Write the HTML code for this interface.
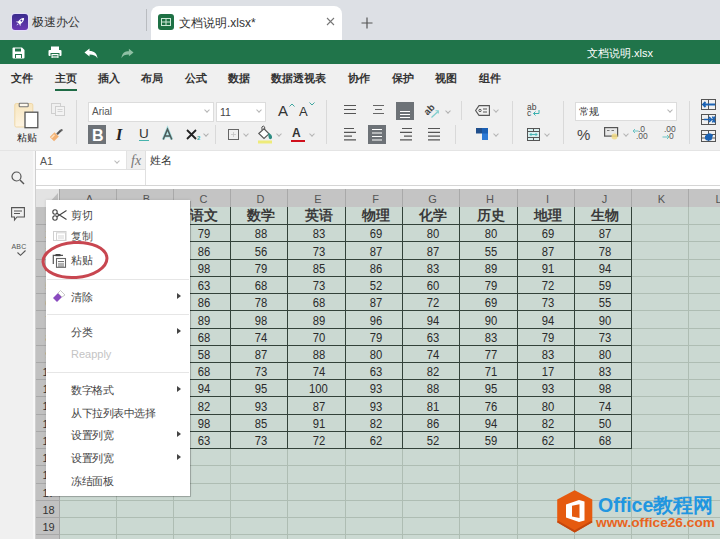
<!DOCTYPE html>
<html><head><meta charset="utf-8">
<style>
*{margin:0;padding:0;box-sizing:border-box}
html,body{width:720px;height:539px;overflow:hidden;background:#f0f0f0;font-family:"Liberation Sans",sans-serif;color:#333}
.a{position:absolute}
svg{position:absolute;overflow:visible}
.mi{position:absolute;top:70px;font-size:11px;line-height:17px;color:#222;white-space:nowrap;font-weight:bold;color:#333}
.t{position:absolute;white-space:nowrap}
.ch{top:190px;height:18px;line-height:18px;text-align:center;font-size:11px;color:#555;padding-left:4px}
.rh{left:37px;width:23px;text-align:center;font-size:11px;line-height:17px;color:#333}
.hd{display:flex;align-items:center;justify-content:center;font-size:13.5px;font-weight:bold;color:#3a3a3a;padding-left:4px}
.dn{display:flex;align-items:center;justify-content:center;padding-top:2px;padding-left:4px;font-size:12.5px;color:#2a2a2a}
.dn span{display:inline-block;transform:scaleX(0.9)}
.cm{position:absolute;left:71px;font-size:10.5px;letter-spacing:-0.5px;line-height:12px;color:#444;white-space:nowrap}
.arr{position:absolute;left:177px;width:0;height:0;border-left:4px solid #444;border-top:3.5px solid transparent;border-bottom:3.5px solid transparent}
.sep{position:absolute;left:47px;width:142px;height:1px;background:#e6e6e6}
.chev{position:absolute;width:5px;height:5px;border-right:1px solid #999;border-bottom:1px solid #999;transform:rotate(45deg)}
.vs{position:absolute;width:1px;background:#d9d9d9}
</style></head><body>
<!-- tab bar -->
<div class="a" style="left:0;top:0;width:720px;height:40px;background:#dde0e5"></div>
<div class="a" style="left:11px;top:13px;width:18px;height:18px;border-radius:4px;background:#e6defa"></div>
<div class="a" style="left:12px;top:14px;width:16px;height:16px;border-radius:3px;background:linear-gradient(#3a2c8e,#6b38b3)"></div>
<svg style="left:12px;top:14px" width="16" height="16" viewBox="0 0 16 16"><g transform="rotate(45 8 8)"><path d="M8 2.2 C10 4 10.3 7 9.6 10 H6.4 C5.7 7 6 4 8 2.2 Z" fill="#fff"/><path d="M6.4 8.5 L4.8 10.8 L6.4 10.4 Z M9.6 8.5 L11.2 10.8 L9.6 10.4 Z" fill="#fff"/><circle cx="8" cy="6" r="1" fill="#4a30a0"/><path d="M7.2 10.8 L8 13 L8.8 10.8 Z" fill="#d9c8ff"/></g></svg>
<div class="t" style="left:32px;top:15px;font-size:11.5px;line-height:14px;color:#333">极速办公</div>
<div class="a" style="left:146px;top:9px;width:1px;height:22px;background:#b9bcc0"></div>
<div class="a" style="left:151px;top:6px;width:191px;height:34px;background:#fff;border-radius:8px 8px 0 0"></div>
<div class="a" style="left:158px;top:14px;width:16px;height:16px;border-radius:3px;background:#1e7145"></div>
<svg style="left:158px;top:14px" width="16" height="16" viewBox="0 0 16 16"><rect x="3.5" y="4.5" width="9" height="7" fill="none" stroke="#cfe9d8" stroke-width="1"/><path d="M3.5 8 H12.5 M8 4.5 V11.5" stroke="#cfe9d8" stroke-width="1"/></svg>
<div class="t" style="left:179px;top:16px;font-size:12px;line-height:15px;color:#333">文档说明.xlsx*</div>
<svg style="left:326px;top:17px" width="9" height="9" viewBox="0 0 9 9"><path d="M1 1 L8 8 M8 1 L1 8" stroke="#777" stroke-width="1.1"/></svg>
<svg style="left:361px;top:17px" width="12" height="12" viewBox="0 0 12 12"><path d="M6 0.5 V11.5 M0.5 6 H11.5" stroke="#555" stroke-width="1.2"/></svg>

<!-- green bar -->
<div class="a" style="left:0;top:40px;width:720px;height:24px;background:#20744a"></div>
<svg style="left:12px;top:47px" width="13" height="12" viewBox="0 0 13 12"><path d="M0.5 1.5 Q0.5 0.5 1.5 0.5 H10 L12.5 3 V10.5 Q12.5 11.5 11.5 11.5 H1.5 Q0.5 11.5 0.5 10.5 Z" fill="#fff"/><rect x="3" y="1.5" width="6" height="3" fill="#20744a"/><rect x="3" y="7" width="7" height="4" fill="#20744a"/><rect x="4" y="8" width="5" height="3" fill="#fff"/></svg>
<svg style="left:48px;top:46px" width="14" height="13" viewBox="0 0 14 13"><rect x="3" y="0.5" width="8" height="3.5" fill="#fff"/><rect x="0.5" y="4" width="13" height="6" rx="1" fill="#fff"/><rect x="3" y="7.5" width="8" height="5" fill="#fff" stroke="#20744a" stroke-width="1"/><path d="M4.5 9.5 H9.5 M4.5 11 H9.5" stroke="#20744a" stroke-width="0.8"/></svg>
<svg style="left:84px;top:48px" width="14" height="11" viewBox="0 0 14 11"><path d="M0.5 4.5 L5.5 0.5 V3 C10 3 13 5 13.5 10.5 C12 7.5 9.5 6.5 5.5 6.5 V8.5 Z" fill="#fff"/></svg>
<svg style="left:121px;top:48px" width="13" height="11" viewBox="0 0 14 11"><path d="M13.5 4.5 L8.5 0.5 V3 C4 3 1 5 0.5 10.5 C2 7.5 4.5 6.5 8.5 6.5 V8.5 Z" fill="#8fc0a4"/></svg>
<div class="t" style="left:587px;top:47px;font-size:11px;line-height:13px;color:#fff">文档说明.xlsx</div>

<!-- menu bar -->
<div class="mi" style="left:11px">文件</div>
<div class="mi" style="left:55px">主页</div>
<div class="a" style="left:55px;top:89px;width:22px;height:2px;background:#1e6b45"></div>
<div class="mi" style="left:98px">插入</div>
<div class="mi" style="left:141px">布局</div>
<div class="mi" style="left:185px">公式</div>
<div class="mi" style="left:228px">数据</div>
<div class="mi" style="left:271px">数据透视表</div>
<div class="mi" style="left:348px">协作</div>
<div class="mi" style="left:392px">保护</div>
<div class="mi" style="left:435px">视图</div>
<div class="mi" style="left:479px">组件</div>

<!-- ribbon -->
<div class="a" style="left:0;top:150px;width:720px;height:1px;background:#e4e4e4"></div>
<!-- paste -->
<svg style="left:14px;top:102px" width="25" height="27" viewBox="0 0 25 27"><defs><linearGradient id="pg" x1="0" y1="0" x2="0" y2="1"><stop offset="0" stop-color="#f8e6bf"/><stop offset="1" stop-color="#fdf4e3"/></linearGradient></defs><rect x="0.8" y="1.5" width="18" height="23.5" rx="1.5" fill="url(#pg)" stroke="#efd7a6" stroke-width="1"/><rect x="5.2" y="1.2" width="9" height="3.6" rx="0.8" fill="#fdf8ee" stroke="#777" stroke-width="1.1"/><rect x="11" y="10.2" width="12.8" height="15.5" fill="#fff" stroke="#555" stroke-width="1.3"/></svg>
<div class="t" style="left:17px;top:132px;font-size:9.5px;line-height:11px;color:#222">粘贴</div>
<svg style="left:51px;top:103px" width="14" height="13" viewBox="0 0 14 13"><rect x="0.5" y="0.5" width="9" height="10" fill="none" stroke="#cfcfcf" stroke-width="1"/><rect x="4.5" y="3.5" width="9" height="9" fill="#f3f3f3" stroke="#cfcfcf" stroke-width="1"/><path d="M6.5 6.5 H11.5 M6.5 8.5 H11.5" stroke="#cfcfcf" stroke-width="0.9"/></svg>
<svg style="left:49px;top:129px" width="14" height="13" viewBox="0 0 14 13"><path d="M0.8 8 L5.5 3.3 L9.8 7.6 L5.1 12.3 Z" fill="#f3b173"/><path d="M2.5 8.8 L5.5 5.8" stroke="#fde3c3" stroke-width="1.4"/><path d="M8 5.2 L12 1.2" stroke="#555" stroke-width="2.2"/><circle cx="12.6" cy="1.2" r="1.1" fill="#666"/></svg>
<div class="vs" style="left:76px;top:100px;height:44px"></div>
<!-- font box -->
<div class="a" style="left:88px;top:102px;width:126px;height:20px;background:#fff;border:1px solid #dcdcdc"></div>
<div class="t" style="left:92px;top:106px;font-size:10px;line-height:12px;color:#555">Arial</div>
<div class="chev" style="left:205px;top:108px;width:4px;height:4px;border-color:#b5b5b5"></div>
<div class="a" style="left:216px;top:102px;width:50px;height:20px;background:#fff;border:1px solid #dcdcdc"></div>
<div class="t" style="left:220px;top:106px;font-size:10.5px;line-height:12px;color:#444">11</div>
<div class="chev" style="left:257px;top:108px;width:4px;height:4px;border-color:#b5b5b5"></div>
<!-- grow / shrink -->
<div class="t" style="left:278px;top:103px;font-size:15px;line-height:15px;color:#333">A</div>
<svg style="left:289px;top:103px" width="6" height="4" viewBox="0 0 6 4"><path d="M0.5 3.5 L3 1 L5.5 3.5" fill="none" stroke="#3fa7a0" stroke-width="1"/></svg>
<div class="t" style="left:299px;top:105px;font-size:13px;line-height:13px;color:#333">A</div>
<svg style="left:309px;top:102px" width="6" height="4" viewBox="0 0 6 4"><path d="M0.5 0.5 L3 3 L5.5 0.5" fill="none" stroke="#3fa7a0" stroke-width="1"/></svg>
<div class="vs" style="left:326px;top:100px;height:44px"></div>
<!-- B I U A X2 -->
<div class="a" style="left:88px;top:125px;width:18px;height:19px;background:#6d7277"></div>
<div class="t" style="left:92px;top:128px;font-size:16px;line-height:16px;font-weight:bold;color:#fff">B</div>
<div class="t" style="left:116px;top:127px;font-family:'Liberation Serif',serif;font-style:italic;font-weight:bold;font-size:16px;line-height:16px;color:#222">I</div>
<div class="t" style="left:139px;top:127px;font-size:13.5px;line-height:14px;color:#333">U</div>
<div class="a" style="left:139px;top:140px;width:10px;height:1px;background:#46b3ad"></div>
<svg style="left:162px;top:128px" width="11" height="12" viewBox="0 0 11 12"><path d="M1.2 11.5 L5.5 1.2 L9.8 11.5 M2.8 8 H8.2" fill="none" stroke="#a6dede" stroke-width="3"/><path d="M1.2 11.5 L5.5 1.2 L9.8 11.5 M2.8 8 H8.2" fill="none" stroke="#4d5a5a" stroke-width="1.5"/></svg>
<svg style="left:186px;top:129px" width="11" height="11" viewBox="0 0 11 11"><path d="M1 1 L10 10 M10 1 L1 10" stroke="#222" stroke-width="1.8"/></svg>
<div class="t" style="left:197px;top:135px;font-size:6px;line-height:6px;color:#3aa7a3;font-weight:bold">2</div>
<div class="chev" style="left:204px;top:132px;width:4px;height:4px;border-color:#b0b0b0"></div>
<div class="vs" style="left:215px;top:125px;height:19px"></div>
<!-- border / fill / font color -->
<svg style="left:228px;top:129px" width="11" height="11" viewBox="0 0 11 11"><rect x="0.5" y="0.5" width="10" height="10" fill="none" stroke="#666" stroke-width="1"/><path d="M5.5 3 V8 M3 5.5 H8" stroke="#c4c4c4" stroke-width="0.8"/></svg>
<div class="chev" style="left:244px;top:132px;width:4px;height:4px;border-color:#b5b5b5"></div>
<svg style="left:257px;top:125px" width="17" height="19" viewBox="0 0 17 19"><path d="M1.8 8.5 L7 3.8 L12 8.8 L7 13.5 Z" fill="#fff" stroke="#555" stroke-width="1.1"/><path d="M5 5 Q4.2 1 6.2 1 Q8.2 1 7.8 4.6" fill="none" stroke="#555" stroke-width="1"/><path d="M11.5 8 Q15.5 9.5 15 13 Q14 15 12 13.5 Q11 11 11.5 8 Z" fill="#2d8c82"/><rect x="1" y="15.5" width="14" height="3" fill="#eeeb7a"/></svg>
<div class="chev" style="left:277px;top:132px;width:4px;height:4px;border-color:#b5b5b5"></div>
<div class="t" style="left:292px;top:127px;font-size:12px;line-height:12px;font-weight:bold;color:#333">A</div>
<div class="a" style="left:291px;top:140px;width:14px;height:2px;background:#d0101c"></div>
<div class="chev" style="left:310px;top:132px;width:4px;height:4px;border-color:#b5b5b5"></div>
<!-- alignment -->
<svg style="left:343px;top:105px" width="14" height="10" viewBox="0 0 14 10"><path d="M1 0.5 H13 M1 4.5 H13 M1 8.5 H13" stroke="#555" stroke-width="1.2"/></svg>
<svg style="left:372px;top:105px" width="13" height="10" viewBox="0 0 13 10"><path d="M1 0.5 H12 M3 4.5 H10 M1 8.5 H12" stroke="#666" stroke-width="1.2"/></svg>
<div class="a" style="left:396px;top:102px;width:18px;height:18px;background:#6d7277"></div>
<svg style="left:396px;top:102px" width="18" height="18" viewBox="0 0 18 18"><path d="M4 9.5 H14 M4 12.5 H14 M4 15.5 H14" stroke="#fff" stroke-width="1"/></svg>
<svg style="left:424px;top:103px" width="17" height="16" viewBox="0 0 17 16"><text x="0" y="10" font-family="Liberation Sans" font-size="9.5" font-weight="bold" fill="#444" transform="rotate(-45 5 7)">ab</text><path d="M7.5 14.5 L14 8.5" stroke="#7fcdcd" stroke-width="1.3"/><path d="M11.5 7.8 L14.3 7.8 L14.3 10.6" fill="none" stroke="#7fcdcd" stroke-width="1.1"/></svg>
<div class="chev" style="left:446px;top:109px;width:4px;height:4px;border-color:#b0b0b0"></div>
<svg style="left:343px;top:128px" width="14" height="13" viewBox="0 0 14 13"><path d="M1 0.5 H11 M1 4.3 H13 M1 8.1 H9 M1 11.9 H13" stroke="#555" stroke-width="1.2"/></svg>
<div class="a" style="left:368px;top:125px;width:18px;height:19px;background:#6d7277"></div>
<svg style="left:368px;top:125px" width="18" height="19" viewBox="0 0 18 19"><path d="M4 4.5 H14 M4 8 H14 M4 11.5 H14 M4 15 H14" stroke="#fff" stroke-width="1"/></svg>
<svg style="left:399px;top:128px" width="14" height="13" viewBox="0 0 14 13"><path d="M3 0.5 H13 M1 4.3 H13 M5 8.1 H13 M1 11.9 H13" stroke="#555" stroke-width="1.2"/></svg>
<svg style="left:427px;top:128px" width="14" height="13" viewBox="0 0 14 13"><path d="M1 0.5 H13 M1 4.3 H13 M1 8.1 H13 M1 11.9 H13" stroke="#555" stroke-width="1.2"/></svg>
<div class="vs" style="left:455px;top:125px;height:19px"></div>
<div class="vs" style="left:461px;top:101px;height:19px"></div>
<!-- tag / blue -->
<svg style="left:475px;top:105px" width="15" height="11" viewBox="0 0 15 11"><path d="M4 0.6 H14.4 V10.4 H4 L0.6 5.5 Z" fill="none" stroke="#555" stroke-width="1.1"/><circle cx="5" cy="5.5" r="1.2" fill="none" stroke="#555" stroke-width="1"/><path d="M8 4 H12 M8 7 H12" stroke="#555" stroke-width="1"/></svg>
<div class="chev" style="left:494px;top:108px;width:4px;height:4px;border-color:#b5b5b5"></div>
<svg style="left:476px;top:128px" width="12" height="12" viewBox="0 0 12 12"><rect x="0" y="0" width="6" height="5.5" fill="#1f4e8c"/><rect x="6" y="0" width="6" height="12" fill="#2d7ad6"/><rect x="6" y="0" width="6" height="5.5" fill="#1a5fb4"/></svg>
<div class="chev" style="left:494px;top:132px;width:4px;height:4px;border-color:#b5b5b5"></div>
<div class="vs" style="left:512px;top:101px;height:43px"></div>
<!-- wrap / merge -->
<div class="t" style="left:527px;top:104px;font-size:8.5px;line-height:6px;color:#444">ab<br>c</div>
<svg style="left:532px;top:110px" width="8" height="7" viewBox="0 0 8 7"><path d="M7 0 V3.5 H1.5 M3.5 1.5 L1.5 3.5 L3.5 5.5" fill="none" stroke="#3ab0b0" stroke-width="1"/></svg>
<svg style="left:527px;top:128px" width="13" height="13" viewBox="0 0 13 13"><rect x="0.5" y="0.5" width="12" height="12" fill="#d9f0f0" stroke="#555" stroke-width="1"/><path d="M0.5 3.5 H12.5 M0.5 9.5 H12.5 M6.5 0.5 V3.5 M6.5 9.5 V12.5" stroke="#555" stroke-width="1"/><path d="M3 6.5 H10 M4.5 5 L3 6.5 L4.5 8 M8.5 5 L10 6.5 L8.5 8" fill="none" stroke="#3ab0b0" stroke-width="0.9"/></svg>
<div class="chev" style="left:545px;top:132px;width:4px;height:4px;border-color:#b5b5b5"></div>
<div class="vs" style="left:563px;top:101px;height:43px"></div>
<!-- number format -->
<div class="a" style="left:575px;top:102px;width:102px;height:19px;background:#fff;border:1px solid #dcdcdc"></div>
<div class="t" style="left:579px;top:106px;font-size:10px;line-height:12px;color:#333">常规</div>
<div class="chev" style="left:668px;top:108px;width:4px;height:4px;border-color:#b5b5b5"></div>
<div class="t" style="left:577px;top:127px;font-size:15px;line-height:15px;color:#444">%</div>
<svg style="left:604px;top:127px" width="16" height="14" viewBox="0 0 16 14"><rect x="0.6" y="0.6" width="13" height="8.5" fill="#e8e8e8" stroke="#555" stroke-width="1.2"/><path d="M3 3.5 H5.5 M7.5 3.5 H10" stroke="#777" stroke-width="1.2"/><circle cx="10.5" cy="9.5" r="3" fill="#f3dc86" opacity="0.85"/></svg>
<div class="chev" style="left:624px;top:132px;width:4px;height:4px;border-color:#b5b5b5"></div>
<div class="t" style="left:638px;top:126px;font-size:8.5px;line-height:7px;color:#555">.0</div>
<div class="t" style="left:636px;top:133px;font-size:8.5px;line-height:7px;color:#555">.00</div>
<svg style="left:632px;top:128px" width="7" height="6" viewBox="0 0 7 6"><path d="M6.5 3 H1 M3 1 L1 3 L3 5" fill="none" stroke="#6cc4c4" stroke-width="1"/></svg>
<div class="t" style="left:664px;top:126px;font-size:8.5px;line-height:7px;color:#555">.00</div>
<svg style="left:662px;top:134px" width="8" height="6" viewBox="0 0 8 6"><path d="M0.5 3 H7 M5 1 L7 3 L5 5" fill="none" stroke="#6cc4c4" stroke-width="1"/></svg>
<div class="t" style="left:669px;top:133px;font-size:8.5px;line-height:7px;color:#555">0</div>
<div class="vs" style="left:689px;top:101px;height:43px"></div>
<!-- right icons -->
<svg style="left:701px;top:99px" width="15" height="43" viewBox="0 0 15 43"><g fill="none" stroke="#555" stroke-width="1"><rect x="0.5" y="0.5" width="14" height="10"/><path d="M7.5 0.5 V10.5 M0.5 5.5 H14.5"/><rect x="0.5" y="15.5" width="14" height="10"/><path d="M7.5 15.5 V25.5 M0.5 20.5 H14.5"/><rect x="0.5" y="31.5" width="14" height="11"/><path d="M7.5 31.5 V42.5 M0.5 35.5 H14.5 M0.5 39 H14.5"/></g><path d="M2 5.5 H14 M4.5 3 L2 5.5 L4.5 8" fill="none" stroke="#1b62b3" stroke-width="1.8"/><path d="M3 20.5 H10 M8 18 L10.5 20.5 L8 23 M11.5 17.5 L14 23.5 M14 17.5 L11.5 23.5" fill="none" stroke="#1b62b3" stroke-width="1.6"/><path d="M4 37 Q8 32 12 36 L10.5 41 Q6 43 4 40 Z" fill="#1b62b3"/></svg>


<!-- sidebar -->
<div class="a" style="left:33px;top:151px;width:2px;height:388px;background:#f7f7f7"></div><div class="a" style="left:35px;top:151px;width:1px;height:388px;background:#cfcfcf"></div>
<svg style="left:11px;top:171px" width="14" height="14" viewBox="0 0 14 14"><circle cx="5.5" cy="5.5" r="4.5" fill="none" stroke="#555" stroke-width="1.2"/><path d="M9 9 L13 13" stroke="#555" stroke-width="1.4"/></svg>
<svg style="left:11px;top:207px" width="14" height="14" viewBox="0 0 14 14"><path d="M0.6 0.6 H13.4 V10 H6 L3.5 13 V10 H0.6 Z" fill="none" stroke="#555" stroke-width="1.1"/><path d="M3 4 H11 M3 6.5 H9" stroke="#555" stroke-width="1"/></svg>
<div class="t" style="left:11.5px;top:243px;font-size:7px;line-height:7px;color:#555;letter-spacing:0.2px">ABC</div>
<svg style="left:17px;top:250px" width="9" height="6" viewBox="0 0 9 6"><path d="M0.5 2.5 L3.5 5.3 L8.5 0.5" fill="none" stroke="#555" stroke-width="1.1"/></svg>

<!-- formula bar -->
<div class="a" style="left:36px;top:151px;width:684px;height:34px;background:#fff"></div>
<div class="a" style="left:36px;top:185px;width:684px;height:1px;background:#d5d5d5"></div>
<div class="a" style="left:36px;top:169px;width:109px;height:1px;background:#e0e0e0"></div>
<div class="a" style="left:126px;top:151px;width:19px;height:18px;background:#efefef;border-left:1px solid #e3e3e3"></div>
<div class="a" style="left:145px;top:151px;width:1px;height:34px;background:#e0e0e0"></div>
<div class="t" style="left:40px;top:155px;font-size:10.5px;line-height:12px;color:#555">A1</div>
<div class="chev" style="left:115px;top:159px;width:4px;height:4px;border-color:#bbb"></div>
<div class="t" style="left:131px;top:153px;font-family:'Liberation Serif',serif;font-style:italic;font-size:14px;line-height:16px;color:#777">fx</div>
<div class="t" style="left:150px;top:153px;font-size:11px;line-height:14px;color:#333">姓名</div>

<!-- sheet -->
<div class="a" style="left:36px;top:186px;width:684px;height:3px;background:#fff"></div>
<div class="a" style="left:36px;top:189px;width:23px;height:18px;background:#e3e3e3"></div>
<svg style="left:47px;top:193px" width="11" height="12" viewBox="0 0 11 12"><path d="M11 0 V12 H0 Z" fill="#bdbdbd"/></svg>
<div class="a" style="left:59px;top:189px;width:661px;height:18px;background:#c4c4c4"></div>
<div class="a" style="left:36px;top:207px;width:23px;height:332px;background:#c1c1c1"></div>
<div class="a" style="left:59px;top:189px;width:1px;height:350px;background:#a6a6a6"></div>
<div class="a" style="left:60px;top:207px;width:1px;height:332px;background:#e2e9e4"></div>
<div class="a" style="left:60px;top:207px;width:660px;height:332px;background:#cbd9d2"></div>
<div class="a" style="left:116px;top:189px;width:1px;height:18px;background:#a9a9a9"></div>
<div class="a" style="left:116px;top:207px;width:1px;height:332px;background:#aebdb3"></div>
<div class="a" style="left:173px;top:189px;width:1px;height:18px;background:#a9a9a9"></div>
<div class="a" style="left:173px;top:207px;width:1px;height:332px;background:#aebdb3"></div>
<div class="a" style="left:230px;top:189px;width:1px;height:18px;background:#a9a9a9"></div>
<div class="a" style="left:230px;top:207px;width:1px;height:332px;background:#aebdb3"></div>
<div class="a" style="left:287px;top:189px;width:1px;height:18px;background:#a9a9a9"></div>
<div class="a" style="left:287px;top:207px;width:1px;height:332px;background:#aebdb3"></div>
<div class="a" style="left:345px;top:189px;width:1px;height:18px;background:#a9a9a9"></div>
<div class="a" style="left:345px;top:207px;width:1px;height:332px;background:#aebdb3"></div>
<div class="a" style="left:402px;top:189px;width:1px;height:18px;background:#a9a9a9"></div>
<div class="a" style="left:402px;top:207px;width:1px;height:332px;background:#aebdb3"></div>
<div class="a" style="left:459px;top:189px;width:1px;height:18px;background:#a9a9a9"></div>
<div class="a" style="left:459px;top:207px;width:1px;height:332px;background:#aebdb3"></div>
<div class="a" style="left:517px;top:189px;width:1px;height:18px;background:#a9a9a9"></div>
<div class="a" style="left:517px;top:207px;width:1px;height:332px;background:#aebdb3"></div>
<div class="a" style="left:574px;top:189px;width:1px;height:18px;background:#a9a9a9"></div>
<div class="a" style="left:574px;top:207px;width:1px;height:332px;background:#aebdb3"></div>
<div class="a" style="left:631px;top:189px;width:1px;height:18px;background:#a9a9a9"></div>
<div class="a" style="left:631px;top:207px;width:1px;height:332px;background:#aebdb3"></div>
<div class="a" style="left:688px;top:189px;width:1px;height:18px;background:#a9a9a9"></div>
<div class="a" style="left:688px;top:207px;width:1px;height:332px;background:#aebdb3"></div>
<div class="a" style="left:60px;top:224px;width:660px;height:1px;background:#aebdb3"></div>
<div class="a" style="left:36px;top:224px;width:23px;height:1px;background:#a8a8a8"></div>
<div class="a" style="left:60px;top:241px;width:660px;height:1px;background:#aebdb3"></div>
<div class="a" style="left:36px;top:241px;width:23px;height:1px;background:#a8a8a8"></div>
<div class="a" style="left:60px;top:259px;width:660px;height:1px;background:#aebdb3"></div>
<div class="a" style="left:36px;top:259px;width:23px;height:1px;background:#a8a8a8"></div>
<div class="a" style="left:60px;top:276px;width:660px;height:1px;background:#aebdb3"></div>
<div class="a" style="left:36px;top:276px;width:23px;height:1px;background:#a8a8a8"></div>
<div class="a" style="left:60px;top:293px;width:660px;height:1px;background:#aebdb3"></div>
<div class="a" style="left:36px;top:293px;width:23px;height:1px;background:#a8a8a8"></div>
<div class="a" style="left:60px;top:310px;width:660px;height:1px;background:#aebdb3"></div>
<div class="a" style="left:36px;top:310px;width:23px;height:1px;background:#a8a8a8"></div>
<div class="a" style="left:60px;top:328px;width:660px;height:1px;background:#aebdb3"></div>
<div class="a" style="left:36px;top:328px;width:23px;height:1px;background:#a8a8a8"></div>
<div class="a" style="left:60px;top:345px;width:660px;height:1px;background:#aebdb3"></div>
<div class="a" style="left:36px;top:345px;width:23px;height:1px;background:#a8a8a8"></div>
<div class="a" style="left:60px;top:362px;width:660px;height:1px;background:#aebdb3"></div>
<div class="a" style="left:36px;top:362px;width:23px;height:1px;background:#a8a8a8"></div>
<div class="a" style="left:60px;top:379px;width:660px;height:1px;background:#aebdb3"></div>
<div class="a" style="left:36px;top:379px;width:23px;height:1px;background:#a8a8a8"></div>
<div class="a" style="left:60px;top:396px;width:660px;height:1px;background:#aebdb3"></div>
<div class="a" style="left:36px;top:396px;width:23px;height:1px;background:#a8a8a8"></div>
<div class="a" style="left:60px;top:414px;width:660px;height:1px;background:#aebdb3"></div>
<div class="a" style="left:36px;top:414px;width:23px;height:1px;background:#a8a8a8"></div>
<div class="a" style="left:60px;top:431px;width:660px;height:1px;background:#aebdb3"></div>
<div class="a" style="left:36px;top:431px;width:23px;height:1px;background:#a8a8a8"></div>
<div class="a" style="left:60px;top:448px;width:660px;height:1px;background:#aebdb3"></div>
<div class="a" style="left:36px;top:448px;width:23px;height:1px;background:#a8a8a8"></div>
<div class="a" style="left:60px;top:465px;width:660px;height:1px;background:#aebdb3"></div>
<div class="a" style="left:36px;top:465px;width:23px;height:1px;background:#a8a8a8"></div>
<div class="a" style="left:60px;top:483px;width:660px;height:1px;background:#aebdb3"></div>
<div class="a" style="left:36px;top:483px;width:23px;height:1px;background:#a8a8a8"></div>
<div class="a" style="left:60px;top:500px;width:660px;height:1px;background:#aebdb3"></div>
<div class="a" style="left:36px;top:500px;width:23px;height:1px;background:#a8a8a8"></div>
<div class="a" style="left:60px;top:517px;width:660px;height:1px;background:#aebdb3"></div>
<div class="a" style="left:36px;top:517px;width:23px;height:1px;background:#a8a8a8"></div>
<div class="a" style="left:60px;top:534px;width:660px;height:1px;background:#aebdb3"></div>
<div class="a" style="left:36px;top:534px;width:23px;height:1px;background:#a8a8a8"></div>
<div class="t ch" style="left:59px;width:57px">A</div>
<div class="t ch" style="left:116px;width:57px">B</div>
<div class="t ch" style="left:173px;width:57px">C</div>
<div class="t ch" style="left:230px;width:57px">D</div>
<div class="t ch" style="left:287px;width:58px">E</div>
<div class="t ch" style="left:345px;width:57px">F</div>
<div class="t ch" style="left:402px;width:57px">G</div>
<div class="t ch" style="left:459px;width:58px">H</div>
<div class="t ch" style="left:517px;width:57px">I</div>
<div class="t ch" style="left:574px;width:57px">J</div>
<div class="t ch" style="left:631px;width:57px">K</div>
<div class="t ch" style="left:688px;width:57px">L</div>
<div class="t rh" style="top:209px;height:17px">1</div>
<div class="t rh" style="top:226px;height:17px">2</div>
<div class="t rh" style="top:243px;height:18px">3</div>
<div class="t rh" style="top:261px;height:17px">4</div>
<div class="t rh" style="top:278px;height:17px">5</div>
<div class="t rh" style="top:295px;height:17px">6</div>
<div class="t rh" style="top:312px;height:18px">7</div>
<div class="t rh" style="top:330px;height:17px">8</div>
<div class="t rh" style="top:347px;height:17px">9</div>
<div class="t rh" style="top:364px;height:17px">10</div>
<div class="t rh" style="top:381px;height:17px">11</div>
<div class="t rh" style="top:398px;height:18px">12</div>
<div class="t rh" style="top:416px;height:17px">13</div>
<div class="t rh" style="top:433px;height:17px">14</div>
<div class="t rh" style="top:450px;height:17px">15</div>
<div class="t rh" style="top:467px;height:18px">16</div>
<div class="t rh" style="top:485px;height:17px">17</div>
<div class="t rh" style="top:502px;height:17px">18</div>
<div class="t rh" style="top:519px;height:17px">19</div>
<div class="a" style="left:59px;top:224px;width:573px;height:1px;background:#33423a"></div>
<div class="a" style="left:59px;top:241px;width:573px;height:1px;background:#33423a"></div>
<div class="a" style="left:59px;top:259px;width:573px;height:1px;background:#33423a"></div>
<div class="a" style="left:59px;top:276px;width:573px;height:1px;background:#33423a"></div>
<div class="a" style="left:59px;top:293px;width:573px;height:1px;background:#33423a"></div>
<div class="a" style="left:59px;top:310px;width:573px;height:1px;background:#33423a"></div>
<div class="a" style="left:59px;top:328px;width:573px;height:1px;background:#33423a"></div>
<div class="a" style="left:59px;top:345px;width:573px;height:1px;background:#33423a"></div>
<div class="a" style="left:59px;top:362px;width:573px;height:1px;background:#33423a"></div>
<div class="a" style="left:59px;top:379px;width:573px;height:1px;background:#33423a"></div>
<div class="a" style="left:59px;top:396px;width:573px;height:1px;background:#33423a"></div>
<div class="a" style="left:59px;top:414px;width:573px;height:1px;background:#33423a"></div>
<div class="a" style="left:59px;top:431px;width:573px;height:1px;background:#33423a"></div>
<div class="a" style="left:59px;top:448px;width:573px;height:1px;background:#33423a"></div>
<div class="a" style="left:59px;top:207px;width:1px;height:242px;background:#33423a"></div>
<div class="a" style="left:116px;top:207px;width:1px;height:242px;background:#33423a"></div>
<div class="a" style="left:173px;top:207px;width:1px;height:242px;background:#33423a"></div>
<div class="a" style="left:230px;top:207px;width:1px;height:242px;background:#33423a"></div>
<div class="a" style="left:287px;top:207px;width:1px;height:242px;background:#33423a"></div>
<div class="a" style="left:345px;top:207px;width:1px;height:242px;background:#33423a"></div>
<div class="a" style="left:402px;top:207px;width:1px;height:242px;background:#33423a"></div>
<div class="a" style="left:459px;top:207px;width:1px;height:242px;background:#33423a"></div>
<div class="a" style="left:517px;top:207px;width:1px;height:242px;background:#33423a"></div>
<div class="a" style="left:574px;top:207px;width:1px;height:242px;background:#33423a"></div>
<div class="a" style="left:631px;top:207px;width:1px;height:242px;background:#33423a"></div>
<div class="t hd" style="left:174px;top:208px;width:56px;height:16px"><span>语文</span></div>
<div class="t dn" style="left:174px;top:225px;width:56px;height:16px"><span>79</span></div>
<div class="t dn" style="left:174px;top:242px;width:56px;height:17px"><span>86</span></div>
<div class="t dn" style="left:174px;top:260px;width:56px;height:16px"><span>98</span></div>
<div class="t dn" style="left:174px;top:277px;width:56px;height:16px"><span>63</span></div>
<div class="t dn" style="left:174px;top:294px;width:56px;height:16px"><span>86</span></div>
<div class="t dn" style="left:174px;top:311px;width:56px;height:17px"><span>89</span></div>
<div class="t dn" style="left:174px;top:329px;width:56px;height:16px"><span>68</span></div>
<div class="t dn" style="left:174px;top:346px;width:56px;height:16px"><span>58</span></div>
<div class="t dn" style="left:174px;top:363px;width:56px;height:16px"><span>68</span></div>
<div class="t dn" style="left:174px;top:380px;width:56px;height:16px"><span>94</span></div>
<div class="t dn" style="left:174px;top:397px;width:56px;height:17px"><span>82</span></div>
<div class="t dn" style="left:174px;top:415px;width:56px;height:16px"><span>98</span></div>
<div class="t dn" style="left:174px;top:432px;width:56px;height:16px"><span>63</span></div>
<div class="t hd" style="left:231px;top:208px;width:56px;height:16px"><span>数学</span></div>
<div class="t dn" style="left:231px;top:225px;width:56px;height:16px"><span>88</span></div>
<div class="t dn" style="left:231px;top:242px;width:56px;height:17px"><span>56</span></div>
<div class="t dn" style="left:231px;top:260px;width:56px;height:16px"><span>79</span></div>
<div class="t dn" style="left:231px;top:277px;width:56px;height:16px"><span>68</span></div>
<div class="t dn" style="left:231px;top:294px;width:56px;height:16px"><span>78</span></div>
<div class="t dn" style="left:231px;top:311px;width:56px;height:17px"><span>98</span></div>
<div class="t dn" style="left:231px;top:329px;width:56px;height:16px"><span>74</span></div>
<div class="t dn" style="left:231px;top:346px;width:56px;height:16px"><span>87</span></div>
<div class="t dn" style="left:231px;top:363px;width:56px;height:16px"><span>73</span></div>
<div class="t dn" style="left:231px;top:380px;width:56px;height:16px"><span>95</span></div>
<div class="t dn" style="left:231px;top:397px;width:56px;height:17px"><span>93</span></div>
<div class="t dn" style="left:231px;top:415px;width:56px;height:16px"><span>85</span></div>
<div class="t dn" style="left:231px;top:432px;width:56px;height:16px"><span>73</span></div>
<div class="t hd" style="left:288px;top:208px;width:57px;height:16px"><span>英语</span></div>
<div class="t dn" style="left:288px;top:225px;width:57px;height:16px"><span>83</span></div>
<div class="t dn" style="left:288px;top:242px;width:57px;height:17px"><span>73</span></div>
<div class="t dn" style="left:288px;top:260px;width:57px;height:16px"><span>85</span></div>
<div class="t dn" style="left:288px;top:277px;width:57px;height:16px"><span>73</span></div>
<div class="t dn" style="left:288px;top:294px;width:57px;height:16px"><span>68</span></div>
<div class="t dn" style="left:288px;top:311px;width:57px;height:17px"><span>89</span></div>
<div class="t dn" style="left:288px;top:329px;width:57px;height:16px"><span>70</span></div>
<div class="t dn" style="left:288px;top:346px;width:57px;height:16px"><span>88</span></div>
<div class="t dn" style="left:288px;top:363px;width:57px;height:16px"><span>74</span></div>
<div class="t dn" style="left:288px;top:380px;width:57px;height:16px"><span>100</span></div>
<div class="t dn" style="left:288px;top:397px;width:57px;height:17px"><span>87</span></div>
<div class="t dn" style="left:288px;top:415px;width:57px;height:16px"><span>91</span></div>
<div class="t dn" style="left:288px;top:432px;width:57px;height:16px"><span>72</span></div>
<div class="t hd" style="left:346px;top:208px;width:56px;height:16px"><span>物理</span></div>
<div class="t dn" style="left:346px;top:225px;width:56px;height:16px"><span>69</span></div>
<div class="t dn" style="left:346px;top:242px;width:56px;height:17px"><span>87</span></div>
<div class="t dn" style="left:346px;top:260px;width:56px;height:16px"><span>86</span></div>
<div class="t dn" style="left:346px;top:277px;width:56px;height:16px"><span>52</span></div>
<div class="t dn" style="left:346px;top:294px;width:56px;height:16px"><span>87</span></div>
<div class="t dn" style="left:346px;top:311px;width:56px;height:17px"><span>96</span></div>
<div class="t dn" style="left:346px;top:329px;width:56px;height:16px"><span>79</span></div>
<div class="t dn" style="left:346px;top:346px;width:56px;height:16px"><span>80</span></div>
<div class="t dn" style="left:346px;top:363px;width:56px;height:16px"><span>63</span></div>
<div class="t dn" style="left:346px;top:380px;width:56px;height:16px"><span>93</span></div>
<div class="t dn" style="left:346px;top:397px;width:56px;height:17px"><span>93</span></div>
<div class="t dn" style="left:346px;top:415px;width:56px;height:16px"><span>82</span></div>
<div class="t dn" style="left:346px;top:432px;width:56px;height:16px"><span>62</span></div>
<div class="t hd" style="left:403px;top:208px;width:56px;height:16px"><span>化学</span></div>
<div class="t dn" style="left:403px;top:225px;width:56px;height:16px"><span>80</span></div>
<div class="t dn" style="left:403px;top:242px;width:56px;height:17px"><span>87</span></div>
<div class="t dn" style="left:403px;top:260px;width:56px;height:16px"><span>83</span></div>
<div class="t dn" style="left:403px;top:277px;width:56px;height:16px"><span>60</span></div>
<div class="t dn" style="left:403px;top:294px;width:56px;height:16px"><span>72</span></div>
<div class="t dn" style="left:403px;top:311px;width:56px;height:17px"><span>94</span></div>
<div class="t dn" style="left:403px;top:329px;width:56px;height:16px"><span>63</span></div>
<div class="t dn" style="left:403px;top:346px;width:56px;height:16px"><span>74</span></div>
<div class="t dn" style="left:403px;top:363px;width:56px;height:16px"><span>82</span></div>
<div class="t dn" style="left:403px;top:380px;width:56px;height:16px"><span>88</span></div>
<div class="t dn" style="left:403px;top:397px;width:56px;height:17px"><span>81</span></div>
<div class="t dn" style="left:403px;top:415px;width:56px;height:16px"><span>86</span></div>
<div class="t dn" style="left:403px;top:432px;width:56px;height:16px"><span>52</span></div>
<div class="t hd" style="left:460px;top:208px;width:57px;height:16px"><span>历史</span></div>
<div class="t dn" style="left:460px;top:225px;width:57px;height:16px"><span>80</span></div>
<div class="t dn" style="left:460px;top:242px;width:57px;height:17px"><span>55</span></div>
<div class="t dn" style="left:460px;top:260px;width:57px;height:16px"><span>89</span></div>
<div class="t dn" style="left:460px;top:277px;width:57px;height:16px"><span>79</span></div>
<div class="t dn" style="left:460px;top:294px;width:57px;height:16px"><span>69</span></div>
<div class="t dn" style="left:460px;top:311px;width:57px;height:17px"><span>90</span></div>
<div class="t dn" style="left:460px;top:329px;width:57px;height:16px"><span>83</span></div>
<div class="t dn" style="left:460px;top:346px;width:57px;height:16px"><span>77</span></div>
<div class="t dn" style="left:460px;top:363px;width:57px;height:16px"><span>71</span></div>
<div class="t dn" style="left:460px;top:380px;width:57px;height:16px"><span>95</span></div>
<div class="t dn" style="left:460px;top:397px;width:57px;height:17px"><span>76</span></div>
<div class="t dn" style="left:460px;top:415px;width:57px;height:16px"><span>94</span></div>
<div class="t dn" style="left:460px;top:432px;width:57px;height:16px"><span>59</span></div>
<div class="t hd" style="left:518px;top:208px;width:56px;height:16px"><span>地理</span></div>
<div class="t dn" style="left:518px;top:225px;width:56px;height:16px"><span>69</span></div>
<div class="t dn" style="left:518px;top:242px;width:56px;height:17px"><span>87</span></div>
<div class="t dn" style="left:518px;top:260px;width:56px;height:16px"><span>91</span></div>
<div class="t dn" style="left:518px;top:277px;width:56px;height:16px"><span>72</span></div>
<div class="t dn" style="left:518px;top:294px;width:56px;height:16px"><span>73</span></div>
<div class="t dn" style="left:518px;top:311px;width:56px;height:17px"><span>94</span></div>
<div class="t dn" style="left:518px;top:329px;width:56px;height:16px"><span>79</span></div>
<div class="t dn" style="left:518px;top:346px;width:56px;height:16px"><span>83</span></div>
<div class="t dn" style="left:518px;top:363px;width:56px;height:16px"><span>17</span></div>
<div class="t dn" style="left:518px;top:380px;width:56px;height:16px"><span>93</span></div>
<div class="t dn" style="left:518px;top:397px;width:56px;height:17px"><span>80</span></div>
<div class="t dn" style="left:518px;top:415px;width:56px;height:16px"><span>82</span></div>
<div class="t dn" style="left:518px;top:432px;width:56px;height:16px"><span>62</span></div>
<div class="t hd" style="left:575px;top:208px;width:56px;height:16px"><span>生物</span></div>
<div class="t dn" style="left:575px;top:225px;width:56px;height:16px"><span>87</span></div>
<div class="t dn" style="left:575px;top:242px;width:56px;height:17px"><span>78</span></div>
<div class="t dn" style="left:575px;top:260px;width:56px;height:16px"><span>94</span></div>
<div class="t dn" style="left:575px;top:277px;width:56px;height:16px"><span>59</span></div>
<div class="t dn" style="left:575px;top:294px;width:56px;height:16px"><span>55</span></div>
<div class="t dn" style="left:575px;top:311px;width:56px;height:17px"><span>90</span></div>
<div class="t dn" style="left:575px;top:329px;width:56px;height:16px"><span>73</span></div>
<div class="t dn" style="left:575px;top:346px;width:56px;height:16px"><span>80</span></div>
<div class="t dn" style="left:575px;top:363px;width:56px;height:16px"><span>83</span></div>
<div class="t dn" style="left:575px;top:380px;width:56px;height:16px"><span>98</span></div>
<div class="t dn" style="left:575px;top:397px;width:56px;height:17px"><span>74</span></div>
<div class="t dn" style="left:575px;top:415px;width:56px;height:16px"><span>50</span></div>
<div class="t dn" style="left:575px;top:432px;width:56px;height:16px"><span>68</span></div>

<!-- context menu -->
<div class="a" style="left:46px;top:200px;width:144px;height:296px;background:#fff;box-shadow:1px 1px 0 rgba(0,0,0,0.2),0 0 3px rgba(0,0,0,0.12)"></div>
<svg style="left:52px;top:209px" width="15" height="12" viewBox="0 0 15 12"><circle cx="3" cy="3" r="2.2" fill="none" stroke="#444" stroke-width="1.1"/><circle cx="3" cy="9" r="2.2" fill="none" stroke="#444" stroke-width="1.1"/><path d="M4.8 4.2 L14.5 10.5 M4.8 7.8 L14.5 1.5" stroke="#444" stroke-width="1.1"/></svg>
<div class="cm" style="top:209px">剪切</div>
<svg style="left:53px;top:231px" width="14" height="10" viewBox="0 0 14 10"><rect x="0.5" y="0.5" width="12.5" height="9" fill="none" stroke="#d0d0d0" stroke-width="1"/><rect x="3.5" y="1.8" width="9" height="7.5" fill="none" stroke="#d0d0d0" stroke-width="0.9"/><path d="M5 5 H11 M5 7 H11" stroke="#d0d0d0" stroke-width="0.9"/></svg>
<div class="cm" style="top:230px;color:#555">复制</div>
<svg style="left:52px;top:253px" width="15" height="15" viewBox="0 0 15 15"><path d="M1.3 11 V2.3 H11" fill="none" stroke="#555" stroke-width="1.2"/><rect x="3.5" y="1" width="5" height="2.2" fill="#444"/><rect x="4.5" y="5.5" width="9" height="8.8" fill="#fff" stroke="#666" stroke-width="1.1"/><path d="M6 8.6 H12 M6 11 H12 M6 13 H12" stroke="#555" stroke-width="0.9"/></svg>
<div class="cm" style="top:254px">粘贴</div>
<div class="sep" style="top:279px"></div>
<svg style="left:52px;top:290px" width="14" height="13" viewBox="0 0 14 13"><path d="M1 8 L6 3 L10 7 L5 12 Z" fill="#8a4bbf"/><path d="M6 3 L8.5 0.5 L13 5 L10 7 Z" fill="#fff" stroke="#bbb" stroke-width="0.8"/></svg>
<div class="cm" style="top:291px">清除</div>
<div class="arr" style="top:293px"></div>
<div class="sep" style="top:314px"></div>
<div class="cm" style="top:326px">分类</div>
<div class="arr" style="top:328px"></div>
<div class="cm" style="top:348px;color:#c4c4c4;letter-spacing:0;font-size:11px">Reapply</div>
<div class="sep" style="top:372px"></div>
<div class="cm" style="top:384px">数字格式</div>
<div class="arr" style="top:386px"></div>
<div class="cm" style="top:407px">从下拉列表中选择</div>
<div class="cm" style="top:429px">设置列宽</div>
<div class="arr" style="top:431px"></div>
<div class="cm" style="top:452px">设置列宽</div>
<div class="arr" style="top:454px"></div>
<div class="cm" style="top:475px">冻结面板</div>
<svg style="left:40px;top:238px" width="72" height="44" viewBox="0 0 72 44"><ellipse cx="35" cy="22" rx="32" ry="17.5" transform="rotate(-4 35 22)" fill="none" stroke="#c84650" stroke-width="3"/></svg>

<!-- watermark -->
<svg style="left:557px;top:490px" width="36" height="43" viewBox="0 0 36 43"><path d="M17.7 0.3 L35.3 9.5 L35.3 32.2 L17.7 42.4 L0.2 32.2 L0.2 9.5 Z" fill="#e55a0f"/><path d="M0.5 31.5 L17.7 41.4 L35 31.5" fill="none" stroke="#c4470d" stroke-width="2"/><path d="M9 14.5 L22 10 L27.5 11.5 L27.5 30.5 L22 32 L9 27.5 Z" fill="#fff"/><path d="M15 15.8 L22.5 14.2 L22.5 28 L15 26.5 Z" fill="#e55a0f"/></svg>
<div class="t" style="left:598px;top:494px;font-size:19.5px;line-height:22px;font-weight:bold;color:#2196e0">Office教程网</div>
<div class="t" style="left:596px;top:515px;font-size:13.7px;line-height:15px;font-weight:bold;color:#e8641e">www.office26.com</div>

</body></html>
